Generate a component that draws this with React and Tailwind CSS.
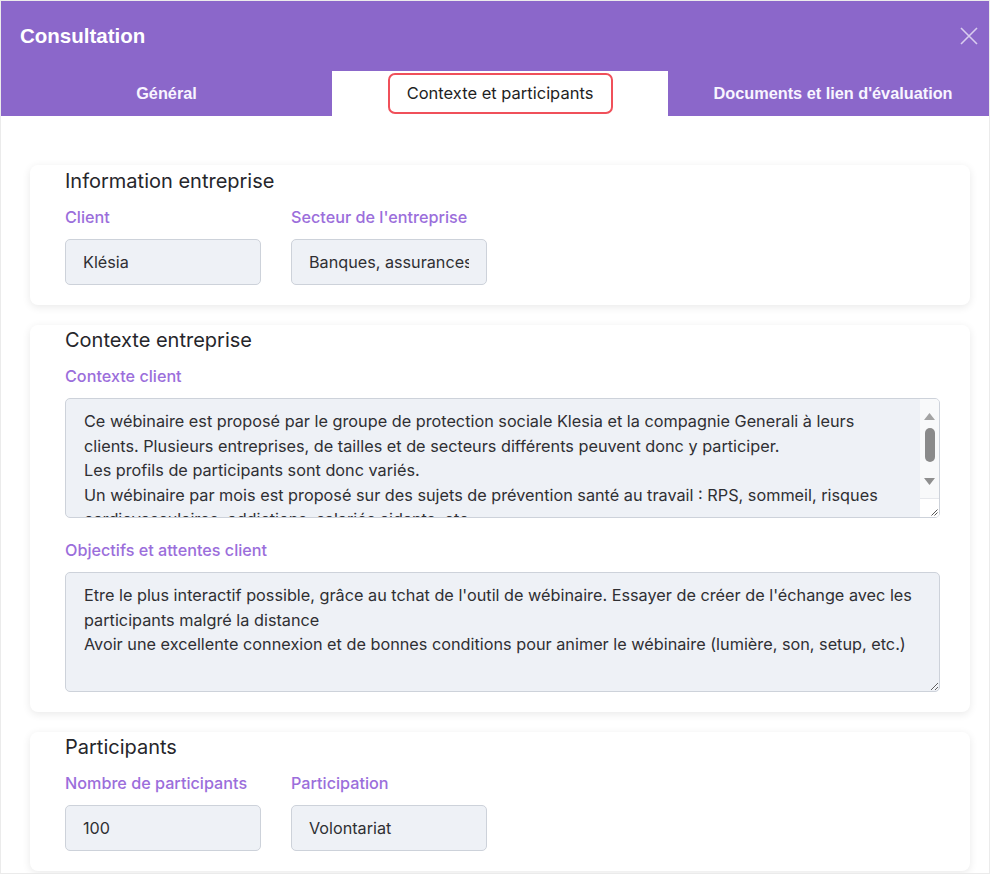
import React from "react";

const contexte =
  "Ce wébinaire est proposé par le groupe de protection sociale Klesia et la compagnie Generali à leurs clients. Plusieurs entreprises, de tailles et de secteurs différents peuvent donc y participer.\nLes profils de participants sont donc variés.\nUn wébinaire par mois est proposé sur des sujets de prévention santé au travail : RPS, sommeil, risques cardiovasculaires, addictions, salariés aidants, etc.\nLes participants sont majoritairement des salariés.";

const objectifs =
  "Etre le plus interactif possible, grâce au tchat de l'outil de wébinaire. Essayer de créer de l'échange avec les participants malgré la distance\nAvoir une excellente connexion et de bonnes conditions pour animer le wébinaire (lumière, son, setup, etc.)";

const inter = { fontFamily: "Inter, sans-serif" };

function Label({ children }) {
  return (
    <div className="text-[16.2px] leading-[22px] font-medium text-[#9b6edb]">{children}</div>
  );
}

function Field({ label, value }) {
  return (
    <div className="flex w-[196px] flex-col gap-[11px]">
      <Label>{label}</Label>
      <input
        readOnly
        value={value}
        className="h-[46px] w-[196px] rounded-[5px] border border-[#cdd2da] bg-[#eef1f6] px-[17px] text-[16.2px] text-[#2f2f33] outline-none"
        style={inter}
      />
    </div>
  );
}

// Resize grip drawn in the bottom-right corner
function Grip() {
  return (
    <svg width="8" height="8" viewBox="0 0 8 8" fill="none">
      <path d="M7.5 1.5L1.5 7.5M7.5 4.5L4.5 7.5" stroke="#555" strokeWidth="1" />
    </svg>
  );
}

// Textarea with a classic always-visible vertical scrollbar
function ScrollArea({ label, value }) {
  return (
    <div className="flex flex-col gap-[11px]">
      <Label>{label}</Label>
      <div className="flex h-[120px] w-[875px] overflow-hidden rounded-[5px] border border-[#cdd2da] bg-[#eef1f6]">
        <textarea
          readOnly
          value={value}
          className="h-full flex-1 resize-none overflow-hidden bg-transparent pl-[18px] pr-[14px] pt-[10px] text-[16.25px] leading-[24.5px] text-[#2f2f33] outline-none"
          style={inter}
        />
        <div className="flex w-[19px] flex-col bg-[#f8f9fa]">
          <div className="flex h-[24px] items-end justify-center pb-[3px]">
            <svg width="11" height="7" viewBox="0 0 11 7">
              <path d="M5.5 0L11 7H0Z" fill="#a3a3a3" />
            </svg>
          </div>
          <div className="flex flex-1 flex-col items-center pt-[5px]">
            <div className="h-[34px] w-[10px] rounded-full bg-[#8a8a8a]" />
          </div>
          <div className="flex h-[22px] items-start justify-center pt-[2px]">
            <svg width="11" height="7" viewBox="0 0 11 7">
              <path d="M0 0H11L5.5 7Z" fill="#8f8f8f" />
            </svg>
          </div>
          <div className="flex h-[19px] items-end justify-end border-t border-[#e6e8ec] bg-white pb-[1px] pr-[1px]">
            <Grip />
          </div>
        </div>
      </div>
    </div>
  );
}

function Area({ label, value }) {
  return (
    <div className="flex flex-col gap-[11px]">
      <Label>{label}</Label>
      <textarea
        readOnly
        value={value}
        className="h-[120px] w-[875px] rounded-[5px] border border-[#cdd2da] bg-[#eef1f6] px-[18px] pt-[10px] text-[16.25px] leading-[24.5px] text-[#2f2f33] outline-none"
        style={inter}
      />
    </div>
  );
}

function Card({ title, children, className = "" }) {
  return (
    <section
      className={
        "w-[940px] rounded-[8px] bg-white px-[35px] pb-[20px] shadow-[0_2px_8px_rgba(0,0,0,0.09)] " +
        className
      }
    >
      <h2 className="h-[28px] text-[20px] leading-[28px] text-[#26262b]">{title}</h2>
      <div className="mt-[11px] flex flex-col">{children}</div>
    </section>
  );
}

export default function App() {
  return (
    <div
      className="h-[874px] w-[990px] overflow-hidden border border-[#ebebeb] bg-white"
      style={{ fontFamily: "Inter, 'Liberation Sans', sans-serif" }}
    >
      {/* Modal header */}
      <div className="bg-[#8b67ca]">
        <div className="flex h-[70px] items-center justify-between pl-[19px] pr-[10px]">
          <h1
            className="text-[20.5px] font-bold text-white"
            style={{ fontFamily: "'Liberation Sans', Arial, sans-serif" }}
          >
            Consultation
          </h1>
          <button className="flex h-[20px] w-[20px] items-center justify-center">
            <svg width="18" height="18" viewBox="0 0 18 18" fill="none">
              <path d="M1 1L17 17M17 1L1 17" stroke="#d9cdef" strokeWidth="1.6" />
            </svg>
          </button>
        </div>
        {/* Tabs */}
        <div
          className="flex h-[45px] text-[16.3px]"
          style={{ fontFamily: "'Liberation Sans', Arial, sans-serif" }}
        >
          <div className="flex w-[331px] items-center justify-center font-bold text-[#f8f5ff]">
            Général
          </div>
          <div className="flex w-[336px] items-center justify-center bg-white">
            <span
              className="flex h-[41px] w-[225px] items-center justify-center rounded-[7px] border-2 border-[#f0505a] text-[16.5px] text-[#1f1f24]"
              style={inter}
            >
              Contexte et participants
            </span>
          </div>
          <div className="flex flex-1 items-center justify-center pl-[9px] font-bold text-[#f8f5ff]">
            Documents et lien d'évaluation
          </div>
        </div>
      </div>

      {/* Body */}
      <div className="flex flex-col gap-[20px] pl-[29px] pt-[49px]">
        <Card title="Information entreprise" className="pt-[2px]">
          <div className="flex gap-[30px]">
            <Field label="Client" value="Klésia" />
            <Field label="Secteur de l'entreprise" value="Banques, assurances" />
          </div>
        </Card>

        <Card title="Contexte entreprise" className="pt-[1px]">
          <div className="flex flex-col gap-[21px]">
            <ScrollArea label="Contexte client" value={contexte} />
            <Area label="Objectifs et attentes client" value={objectifs} />
          </div>
        </Card>

        <Card title="Participants" className="pt-[1px]">
          <div className="flex gap-[30px]">
            <Field label="Nombre de participants" value="100" />
            <Field label="Participation" value="Volontariat" />
          </div>
        </Card>
      </div>
    </div>
  );
}
